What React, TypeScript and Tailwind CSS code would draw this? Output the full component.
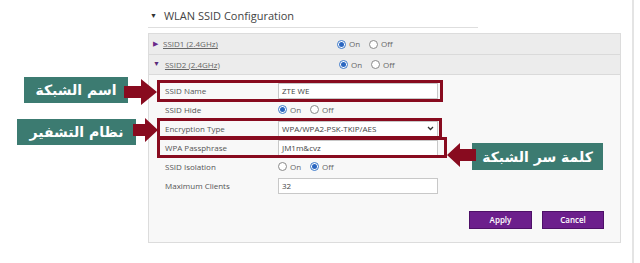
import { FC } from "react";

const Radio: FC<{ checked?: boolean }> = ({ checked }) => (
    <span
        className={`inline-flex items-center justify-center w-[9px] h-[9px] rounded-full border bg-white ${
            checked ? "border-[#3b78c9]" : "border-[#8a8a8a]"
        }`}
    >
        {checked && <span className="w-[5px] h-[5px] rounded-full bg-[#2a66c0]" />}
    </span>
);

const OnOff: FC<{ on: boolean }> = ({ on }) => (
    <div className="flex items-center text-[8px] text-[#666]">
        <Radio checked={on} />
        <span className="ml-[3px] w-[20px]">On</span>
        <Radio checked={!on} />
        <span className="ml-[3px]">Off</span>
    </div>
);

const Field: FC<{ label: string; children: React.ReactNode }> = ({ label, children }) => (
    <div className="flex items-center h-[19px]">
        <span className="w-[113px] shrink-0 text-[8px] text-[#555]">{label}</span>
        {children}
    </div>
);

const TextBox: FC<{ value: string }> = ({ value }) => (
    <div className="w-[160px] h-[16px] border border-[#c8c8c8] bg-white flex items-center pl-[3px] text-[8px] text-[#444]">
        {value}
    </div>
);

const Note: FC<{ text: string; className: string }> = ({ text, className }) => (
    <div
        dir="rtl"
        className={`absolute flex items-center justify-center bg-[#3c7b71] text-white font-bold text-[14px] leading-none font-['DejaVu_Sans',sans-serif] ${className}`}
    >
        {text}
    </div>
);

export default function App() {
    return (
        <div className="relative w-[640px] h-[263px] bg-white overflow-hidden font-['Open_Sans',sans-serif]">
            <div className="pl-[148px] pt-[6px]">
                {/* Section title */}
                <div className="w-[330px] h-[22px] flex items-center border-b border-[#dedede]">
                    <span className="ml-[2px] text-[7px] text-[#333]">▼</span>
                    <span className="ml-[7px] text-[11px] text-[#444]">WLAN SSID Configuration</span>
                </div>

                {/* Panel */}
                <div className="mt-[5px] w-[473px] h-[210px] border border-[#dcdcdc] bg-[#f8f8f8]">
                    <div className="flex items-center h-[21px] bg-[#ececec] border-b border-[#dadada]">
                        <span className="ml-[4px] text-[7px] text-[#6a2a8a]">▶</span>
                        <span className="ml-[5px] w-[174px] text-[8px] text-[#666] underline">SSID1 (2.4GHz)</span>
                        <OnOff on={true} />
                    </div>
                    <div className="flex items-center h-[20px] bg-[#ececec] border-b border-[#dadada]">
                        <span className="ml-[4px] text-[7px] text-[#5a2a7a]">▼</span>
                        <span className="ml-[5px] w-[174px] text-[8px] text-[#666] underline">SSID2 (2.4GHz)</span>
                        <OnOff on={true} />
                    </div>

                    <div className="pl-[16px] pt-[6px]">
                        <Field label="SSID Name">
                            <TextBox value="ZTE WE" />
                        </Field>
                        <Field label="SSID Hide">
                            <OnOff on={true} />
                        </Field>
                        <Field label="Encryption Type">
                            <div className="w-[160px] h-[16px] border border-[#c8c8c8] bg-white flex items-center justify-between px-[3px] text-[8px] text-[#444]">
                                <span>WPA/WPA2-PSK-TKIP/AES</span>
                                <svg width="7" height="5" viewBox="0 0 7 5">
                                    <path d="M1 1l2.5 2.5L6 1" fill="none" stroke="#333" strokeWidth="1.3" />
                                </svg>
                            </div>
                        </Field>
                        <Field label="WPA Passphrase">
                            <TextBox value="JM1m&cvz" />
                        </Field>
                        <Field label="SSID Isolation">
                            <OnOff on={false} />
                        </Field>
                        <Field label="Maximum Clients">
                            <TextBox value="32" />
                        </Field>

                        <div className="flex justify-end gap-[10px] pr-[16px] mt-[16px]">
                            <button className="w-[63px] h-[18px] bg-[#6c1f8c] border border-[#4e1068] text-white text-[8px] font-semibold">
                                Apply
                            </button>
                            <button className="w-[62px] h-[18px] bg-[#6c1f8c] border border-[#4e1068] text-white text-[8px] font-semibold">
                                Cancel
                            </button>
                        </div>
                    </div>
                </div>
            </div>

            {/* page edge */}
            <div className="absolute top-0 left-[632px] w-[2px] h-full bg-[#e4e4e4]" />

            {/* highlight boxes */}
            <div className="absolute left-[157px] top-[80px] w-[286px] h-[22px] border-[3px] border-[#880b1f]" />
            <div className="absolute left-[157px] top-[118px] w-[285px] h-[21px] border-[3px] border-[#880b1f]" />
            <div className="absolute left-[157px] top-[137px] w-[290px] h-[21px] border-[3px] border-[#880b1f]" />

            {/* annotations */}
            <Note text="اسم الشبكة" className="left-[24px] top-[77px] w-[104px] h-[26px]" />
            <Note text="نظام التشفير" className="left-[17px] top-[119px] w-[119px] h-[26px]" />
            <Note text="كلمة سر الشبكة" className="left-[472px] top-[143px] w-[131px] h-[27px]" />

            <svg className="absolute left-[124px] top-[79px]" width="34" height="26" viewBox="0 0 34 26">
                <path d="M0 7h17V0l16 13-16 13v-7H0z" fill="#880b1f" />
            </svg>
            <svg className="absolute left-[133px] top-[118px]" width="26" height="24" viewBox="0 0 26 24">
                <path d="M0 6h12V0l13 12-13 12v-6H0z" fill="#880b1f" />
            </svg>
            <svg className="absolute left-[446px] top-[143px]" width="30" height="24" viewBox="0 0 30 24">
                <path d="M30 6H14V0L1 12l13 12v-6h16z" fill="#880b1f" />
            </svg>
        </div>
    );
}
